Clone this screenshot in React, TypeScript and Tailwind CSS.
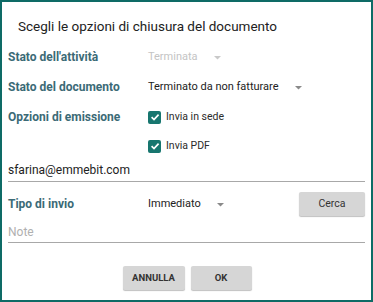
import React from "react";

function Caret({ light }: { light?: boolean }) {
    return (
        <svg width="7" height="4" viewBox="0 0 7 4" className="ml-[16px] mt-[1px]">
            <path d="M0 0 L7 0 L3.5 3.5 Z" fill={light ? "#c9c9c9" : "#8a8a8a"} />
        </svg>
    );
}

function Check({ label }: { label: string }) {
    return (
        <div className="flex items-center">
            <span className="w-[13px] h-[13px] rounded-[2px] bg-[#17766f] flex items-center justify-center">
                <svg width="10" height="10" viewBox="0 0 10 10">
                    <path d="M1.6 5.2 L4 7.5 L8.6 2.6" stroke="#fff" strokeWidth="1.7" fill="none" />
                </svg>
            </span>
            <span className="ml-[5px] text-[10.5px] text-[#2b2b2b]">{label}</span>
        </div>
    );
}

export default function App() {
    const label = "w-[140px] shrink-0 text-[12px] font-bold text-[#3b6a76]";

    return (
        <div
            className="w-[373px] h-[302px] border-2 border-[#0e6b66] bg-white flex flex-col pl-[6px] pr-[6px]"
            style={{ fontFamily: "Roboto, 'Liberation Sans', sans-serif" }}
        >
            <div className="h-[40px] pt-[15px] pl-[10px] text-[13.5px] text-[#222] leading-[18px]">
                Scegli le opzioni di chiusura del documento
            </div>

            <div className="h-[30px] flex items-center">
                <div className={label}>Stato dell'attività</div>
                <span className="text-[11px] text-[#c4c4c4]">Terminata</span>
                <Caret light />
            </div>

            <div className="h-[30px] flex items-center">
                <div className={label}>Stato del documento</div>
                <span className="text-[11px] text-[#222]">Terminato da non fatturare</span>
                <Caret />
            </div>

            <div className="h-[30px] flex items-center">
                <div className={label}>Opzioni di emissione</div>
                <Check label="Invia in sede" />
            </div>

            <div className="h-[26px] flex items-center pt-[2px]">
                <div className="w-[140px] shrink-0" />
                <Check label="Invia PDF" />
            </div>

            <div className="h-[22px] mt-[2px] flex items-end pb-[2px] border-b border-[#a8a8a8] text-[12px] text-[#222]">
                sfarina@emmebit.com
            </div>

            <div className="h-[26px] mt-[9px] flex items-center">
                <div className={label}>Tipo di invio</div>
                <span className="text-[11px] text-[#222]">Immediato</span>
                <Caret />
                <button className="ml-auto w-[66px] h-[24px] bg-[#d6d6d6] rounded-[2px] text-[10.5px] text-[#333] shadow-[0_1px_1px_rgba(0,0,0,0.25)]">
                    Cerca
                </button>
            </div>

            <div className="h-[19px] mt-[7px] flex items-end pb-[1px] border-b border-[#a8a8a8] text-[12px] text-[#b0b0b0]">
                Note
            </div>

            <div className="mt-[23px] flex justify-center gap-[6px] pl-[1px]">
                <button className="w-[62px] h-[24px] bg-[#d6d6d6] rounded-[2px] text-[9.5px] font-bold text-[#333] shadow-[0_1px_1px_rgba(0,0,0,0.25)]">
                    ANNULLA
                </button>
                <button className="w-[61px] h-[24px] bg-[#d6d6d6] rounded-[2px] text-[9.5px] font-bold text-[#333] shadow-[0_1px_1px_rgba(0,0,0,0.25)]">
                    OK
                </button>
            </div>
        </div>
    );
}
